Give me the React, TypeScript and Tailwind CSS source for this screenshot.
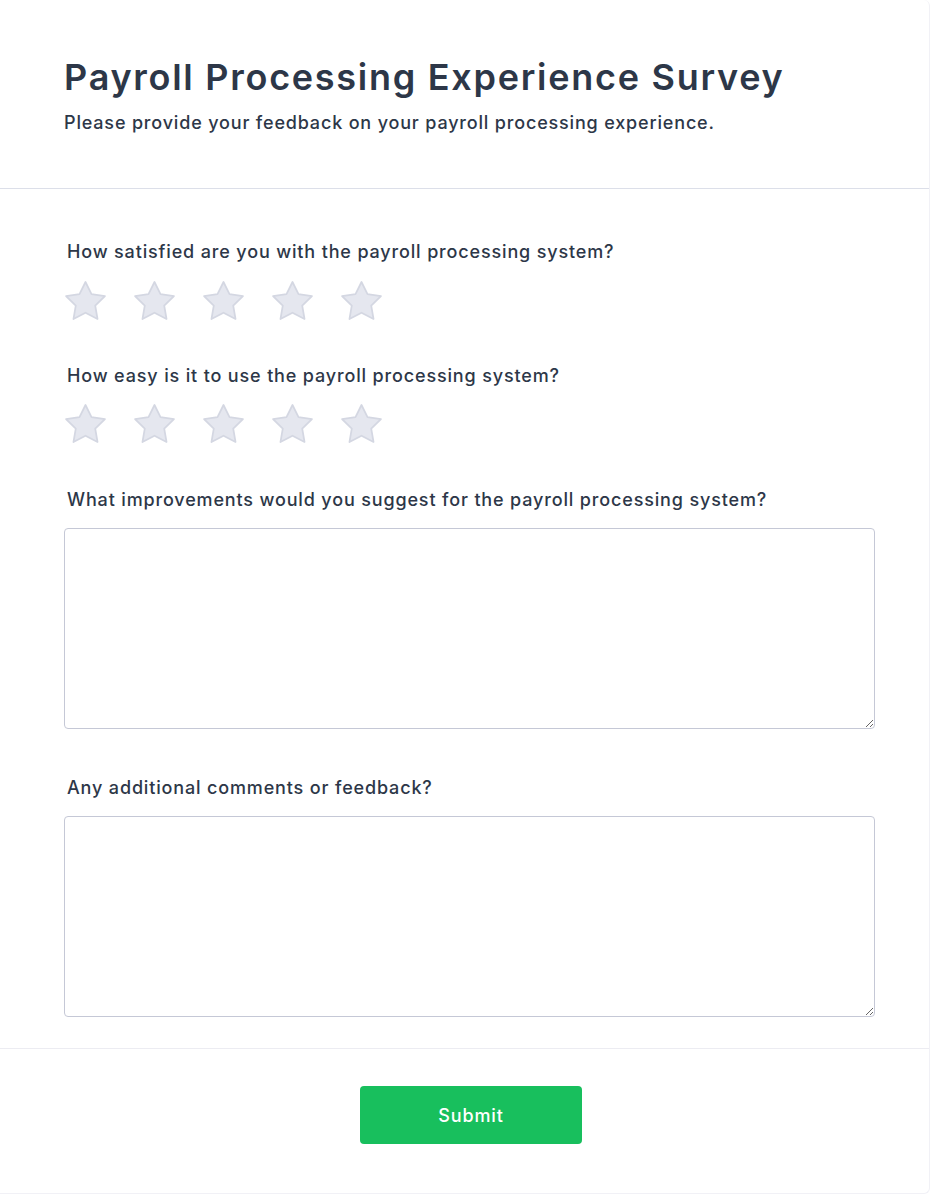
import React from "react";

function Star() {
  return (
    <svg width="39" height="37" viewBox="2 2 20 19.02" className="overflow-visible" aria-hidden="true">
      <polygon
        points="12,2 15.09,8.26 22,9.27 17,14.14 18.18,21.02 12,17.77 5.82,21.02 7,14.14 2,9.27 8.91,8.26"
        fill="#e5e7ef"
        stroke="#d4d7e2"
        strokeWidth="0.9"
        strokeLinejoin="round"
      />
    </svg>
  );
}

function Stars() {
  return (
    <div className="flex gap-[30px] h-[37px] items-center ml-[2px]">
      {[0, 1, 2, 3, 4].map((i) => (
        <button key={i} type="button" className="p-0 bg-transparent border-0 cursor-pointer">
          <Star />
        </button>
      ))}
    </div>
  );
}

export default function App() {
  const font = { fontFamily: "Inter, 'Noto Sans', sans-serif" };
  return (
    <div className="min-h-[1195px] bg-white" style={font}>
      <div className="w-[930px] bg-white border-r border-b border-[#f1f1f6] rounded-br-md rounded-tr-md">
        <div className="pl-16 pr-[54px] pt-[57px] pb-[51px] border-b border-[#dcdfe9]">
          <h1 className="text-[36px] leading-[40px] font-semibold text-[#2d3748] tracking-[0.048em]">
            Payroll Processing Experience Survey
          </h1>
          <p className="mt-[12px] text-[18px] leading-[28px] font-medium text-[#2d3748] tracking-[0.046em]">
            Please provide your feedback on your payroll processing experience.
          </p>
        </div>

        <div className="pl-16 pr-[54px] pt-[49px] pb-[31px] border-b border-[#ececf2]">
          <label className="block pl-[3px] text-[18px] leading-[28px] font-medium text-[#2d3748] tracking-[0.047em]">
            How satisfied are you with the payroll processing system?
          </label>
          <div className="mt-[16px]">
            <Stars />
          </div>

          <label className="block mt-[43px] pl-[3px] text-[18px] leading-[28px] font-medium text-[#2d3748] tracking-[0.047em]">
            How easy is it to use the payroll processing system?
          </label>
          <div className="mt-[15px]">
            <Stars />
          </div>

          <label className="block mt-[44px] pl-[3px] text-[18px] leading-[28px] font-medium text-[#2d3748] tracking-[0.047em]">
            What improvements would you suggest for the payroll processing system?
          </label>
          <textarea className="block mt-[14px] w-full h-[201px] border border-[#c5c8d6] rounded-[4px] p-3 text-[16px] outline-none" />

          <label className="block mt-[45px] pl-[3px] text-[18px] leading-[28px] font-medium text-[#2d3748] tracking-[0.047em]">
            Any additional comments or feedback?
          </label>
          <textarea className="block mt-[14px] w-full h-[201px] border border-[#c5c8d6] rounded-[4px] p-3 text-[16px] outline-none" />
        </div>

        <div className="pl-16 pr-[54px] pt-[37px] pb-[49px] flex justify-center">
          <button
            type="button"
            className="ml-[3px] w-[222px] h-[58px] rounded-[4px] bg-[#18bf5d] text-white text-[18px] font-medium tracking-[0.05em]"
          >
            Submit
          </button>
        </div>
      </div>
    </div>
  );
}
